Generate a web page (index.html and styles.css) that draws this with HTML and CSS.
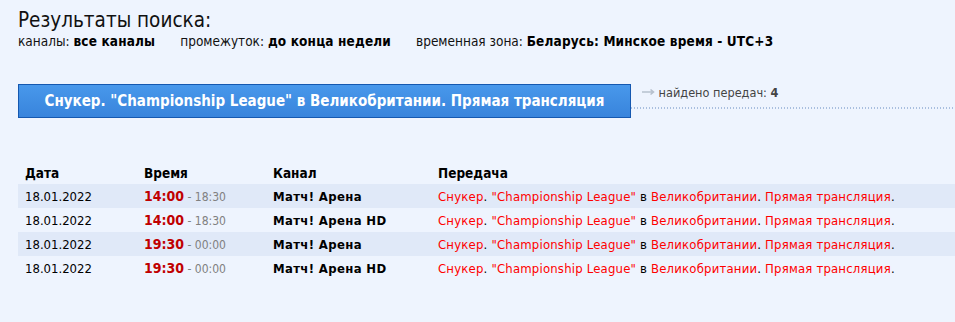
FILE: index.html
```html
<!DOCTYPE html>
<html lang="ru">
<head>
<meta charset="utf-8">
<link rel="stylesheet" href="styles.css">
</head>
<body>
<div class="page">
  <h1 class="title">Результаты поиска:</h1>
  <div class="filters">
    <span class="filter">каналы: <b>все каналы</b></span>
    <span class="filter">промежуток: <b>до конца недели</b></span>
    <span class="filter">временная зона: <b>Беларусь: Минское время - UTC+3</b></span>
  </div>
  <div class="bar">
    <div class="query">Снукер. "Championship League" в Великобритании. Прямая трансляция</div>
    <div class="found"><svg class="arrow" width="13" height="8" viewBox="0 0 13 8"><path d="M0 4H11.5M8.5 1.5L11.5 4L8.5 6.5" fill="none" stroke="#b7c1ce" stroke-width="1.6"/></svg> найдено передач: <b>4</b></div>
  </div>
  <table class="results">
    <thead>
      <tr><th class="c-date">Дата</th><th class="c-time">Время</th><th class="c-chan">Канал</th><th>Передача</th></tr>
    </thead>
    <tbody>
      <tr class="odd"><td>18.01.2022</td><td><b class="start">14:00</b><span class="end"> - 18:30</span></td><td class="chan">Матч! Арена</td><td class="prog"><span class="r">Снукер</span>. <span class="r">"Championship League"</span> в <span class="r">Великобритании</span>. <span class="r">Прямая трансляция</span>.</td></tr>
      <tr><td>18.01.2022</td><td><b class="start">14:00</b><span class="end"> - 18:30</span></td><td class="chan">Матч! Арена HD</td><td class="prog"><span class="r">Снукер</span>. <span class="r">"Championship League"</span> в <span class="r">Великобритании</span>. <span class="r">Прямая трансляция</span>.</td></tr>
      <tr class="odd"><td>18.01.2022</td><td><b class="start">19:30</b><span class="end"> - 00:00</span></td><td class="chan">Матч! Арена</td><td class="prog"><span class="r">Снукер</span>. <span class="r">"Championship League"</span> в <span class="r">Великобритании</span>. <span class="r">Прямая трансляция</span>.</td></tr>
      <tr><td>18.01.2022</td><td><b class="start">19:30</b><span class="end"> - 00:00</span></td><td class="chan">Матч! Арена HD</td><td class="prog"><span class="r">Снукер</span>. <span class="r">"Championship League"</span> в <span class="r">Великобритании</span>. <span class="r">Прямая трансляция</span>.</td></tr>
    </tbody>
  </table>
</div>
</body>
</html>
```

FILE: styles.css
```css
html, body {
  margin: 0;
  padding: 0;
  background: #eef4fe;
}
body {
  font-family: Tahoma, "DejaVu Sans Condensed", "DejaVu Sans", sans-serif;
  color: #000;
  font-size: 13px;
}
.page {
  padding: 7px 0 0 18px;
}
.title {
  margin: 0;
  font-size: 20.5px;
  font-weight: normal;
  line-height: 26px;
  color: #111;
}
.filters {
  display: flex;
  gap: 25px;
  font-size: 13.5px;
  line-height: 16px;
  color: #111;
}
.filters b {
  font-weight: bold;
  color: #000;
  letter-spacing: 0.15px;
}
.bar {
  display: flex;
  align-items: stretch;
  margin-top: 35px;
}
.query {
  width: 611px;
  height: 32px;
  border: 1px solid #1558b0;
  background: linear-gradient(#4898eb, #3884dc);
  color: #fff;
  font-weight: bold;
  font-size: 15px;
  line-height: 32px;
  text-align: center;
  white-space: nowrap;
}
.found {
  flex: 1;
  padding: 1px 0 0 11px;
  margin-bottom: 9px;
  background: linear-gradient(to right, #a9bfdf 1px, transparent 1px) left bottom / 3px 2px repeat-x;
  color: #444;
  font-size: 12.6px;
  line-height: 16px;
}
.found b {
  color: #444;
}
.arrow {
  vertical-align: 1px;
}
.results {
  margin-top: 44px;
  width: 100%;
  border-collapse: collapse;
}
.results th {
  text-align: left;
  font-weight: bold;
  font-size: 13.5px;
  height: 22px;
  padding: 0 0 0 7px;
}
.results td {
  height: 24px;
  padding: 0 0 0 7px;
  white-space: nowrap;
  font-size: 13px;
}
.c-date { width: 112px; }
.c-time { width: 122px; }
.c-chan { width: 158px; }
.odd td {
  background: #e0e9f8;
}
.start {
  color: #c00000;
  font-size: 14px;
}
.end {
  color: #808080;
  font-size: 12px;
}
.chan {
  font-weight: bold;
  letter-spacing: 0.35px;
}
.prog {
  letter-spacing: 0.19px;
}
.r {
  color: #ff0000;
}
```
